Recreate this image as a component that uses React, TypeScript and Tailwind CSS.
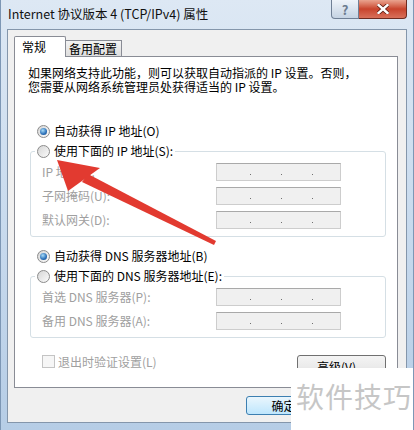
function Radio({ checked }: { checked?: boolean }) {
  return (
    <span className="w-[13px] h-[13px] rounded-full border border-[#8b8b8b] bg-linear-to-br from-[#d6d6d6] to-[#fbfbfb] flex items-center justify-center shrink-0">
      {checked && (
        <span className="w-[7px] h-[7px] rounded-full bg-[radial-gradient(circle_at_40%_35%,#a8dcf8,#2a6fb8_60%,#16457c)]" />
      )}
    </span>
  );
}

function IpBox() {
  return (
    <div className="w-[125px] h-[18px] border border-[#cdcdcd] border-t-[#a9a9a9] bg-[#f0f0f0] flex items-end pb-[5px] pl-[33px] gap-[30px]">
      <span className="w-px h-px bg-[#707070]" />
      <span className="w-px h-px bg-[#707070]" />
      <span className="w-px h-px bg-[#707070]" />
    </div>
  );
}

function Field({ label }: { label: string }) {
  return (
    <div className="h-[24px] flex items-center">
      <span className="w-[174px] text-[#a0a0a0] leading-[14px]">{label}</span>
      <IpBox />
    </div>
  );
}

function GroupBox({ children, h }: { children: React.ReactNode; h: string }) {
  return (
    <div className={`ml-[15px] -mt-[10px] w-[356px] ${h} border border-[#d5dfe5] rounded-[3px] pt-[8px] pl-[11px]`}>
      {children}
    </div>
  );
}

export default function App() {
  return (
    <div className="w-[414px] h-[430px] overflow-hidden relative flex flex-col bg-linear-to-b from-[#dde8f4] via-[#c9dbee] to-[#b6cde6] border-x border-[#7d97b5] font-['Noto_Sans_CJK_SC',sans-serif] text-[12px] text-black">
      {/* title bar */}
      <div className="h-[29px] flex items-start shrink-0">
        <div className="pl-[7px] pt-[6px] leading-[16px] text-[12.5px] text-[#101010]">
          Internet 协议版本 4 (TCP/IPv4) 属性
        </div>
        <div className="ml-auto mr-[6px] flex">
          <div className="w-[28px] h-[19px] border border-t-0 border-[#6f7f95] rounded-bl-[4px] bg-linear-to-b from-[#eef3f9] to-[#c5d3e3] flex items-center justify-center text-[13px] font-bold text-[#6c7c90] leading-none">
            ?
          </div>
          <div className="w-[48px] h-[19px] border border-t-0 border-l-0 border-[#6e2b20] rounded-br-[4px] bg-linear-to-b from-[#e9a38f] via-[#c8432c] to-[#d8705a] flex items-center justify-center">
            <svg width="12" height="10" viewBox="0 0 12 10">
              <path d="M1.5 1 L10.5 9 M10.5 1 L1.5 9" stroke="#5a1a10" strokeWidth="4" strokeLinecap="square" />
              <path d="M1.5 1 L10.5 9 M10.5 1 L1.5 9" stroke="#ffffff" strokeWidth="2.4" strokeLinecap="square" />
            </svg>
          </div>
        </div>
      </div>

      {/* client area */}
      <div className="mx-[6px] h-[394px] border border-[#8496ab] bg-[#f0f0f0] pt-[6px] pl-[6px] flex flex-col">
        {/* tabs */}
        <div className="h-[20px] flex items-end">
          <div className="relative z-10 -mb-px w-[52px] h-[21px] border border-b-0 border-[#898c95] bg-white flex items-center pl-[7px] rounded-t-[2px]">
            常规
          </div>
          <div className="w-[56px] h-[16px] border border-l-0 border-b-0 border-[#898c95] bg-linear-to-b from-[#f3f3f3] to-[#dedede] flex items-center pl-[3px] leading-[14px]">
            备用配置
          </div>
        </div>

        {/* panel */}
        <div className="w-[384px] h-[332px] border border-[#898c95] bg-white flex flex-col">
          <div className="pt-[9px] pl-[13px] leading-[14px]">
            <div>如果网络支持此功能，则可以获取自动指派的 IP 设置。否则，</div>
            <div>您需要从网络系统管理员处获得适当的 IP 设置。</div>
          </div>

          <div className="mt-[27px] h-[20px] flex items-center pl-[22px] gap-[4px]">
            <Radio checked />
            <span>自动获得 IP 地址(O)</span>
          </div>
          <div className="relative z-10 h-[20px] flex items-center pl-[20px]">
            <span className="inline-flex items-center gap-[4px] bg-white px-[2px] h-[16px]">
              <Radio />
              <span>使用下面的 IP 地址(S):</span>
            </span>
          </div>
          <GroupBox h="h-[86px]">
            <Field label="IP 地址(I):" />
            <Field label="子网掩码(U):" />
            <Field label="默认网关(D):" />
          </GroupBox>

          <div className="mt-[9px] h-[20px] flex items-center pl-[22px] gap-[4px]">
            <Radio checked />
            <span>自动获得 DNS 服务器地址(B)</span>
          </div>
          <div className="relative z-10 h-[20px] flex items-center pl-[20px]">
            <span className="inline-flex items-center gap-[4px] bg-white px-[2px] h-[16px]">
              <Radio />
              <span>使用下面的 DNS 服务器地址(E):</span>
            </span>
          </div>
          <GroupBox h="h-[62px]">
            <Field label="首选 DNS 服务器(P):" />
            <Field label="备用 DNS 服务器(A):" />
          </GroupBox>

          <div className="mt-[17px] flex items-start pl-[27px] pr-[11px]">
            <span className="w-[13px] h-[13px] border border-[#c4c4c4] bg-[#f6f6f6] shrink-0" />
            <span className="ml-[3px] text-[#a0a0a0] leading-[13px]">退出时验证设置(L)</span>
            <div className="ml-auto w-[89px] h-[23px] border border-[#707070] rounded-[3px] bg-linear-to-b from-[#f4f4f4] via-[#ebebeb] to-[#d6d6d6] flex items-center justify-center">
              高级(V)...
            </div>
          </div>
        </div>

        {/* dialog buttons */}
        <div className="mt-[8px] flex pl-[232px] gap-[6px]">
          <div className="w-[75px] h-[19px] border border-[#3c7fb1] rounded-[3px] bg-linear-to-b from-[#eaf6fd] to-[#bee6fd] flex items-center justify-center">
            确定
          </div>
          <div className="w-[75px] h-[19px] border border-[#707070] rounded-[3px] bg-linear-to-b from-[#f4f4f4] to-[#d6d6d6]" />
        </div>
      </div>

      {/* red arrow annotation */}
      <svg className="absolute inset-0 pointer-events-none" width="414" height="430" viewBox="0 0 414 430">
        <polygon points="56,160 99,168 67,191" fill="#e23a30" />
        <polygon points="87,174 81,182 213,245 215,241" fill="#e23a30" />
      </svg>

      {/* watermark */}
      <div className="absolute left-[290px] top-[368px] right-0 bottom-0 bg-white pl-[5px] pt-[13px]">
        <span className="text-[28px] leading-[30px] text-[#c6c6c6] tracking-[1px]">软件技巧</span>
      </div>
    </div>
  );
}
